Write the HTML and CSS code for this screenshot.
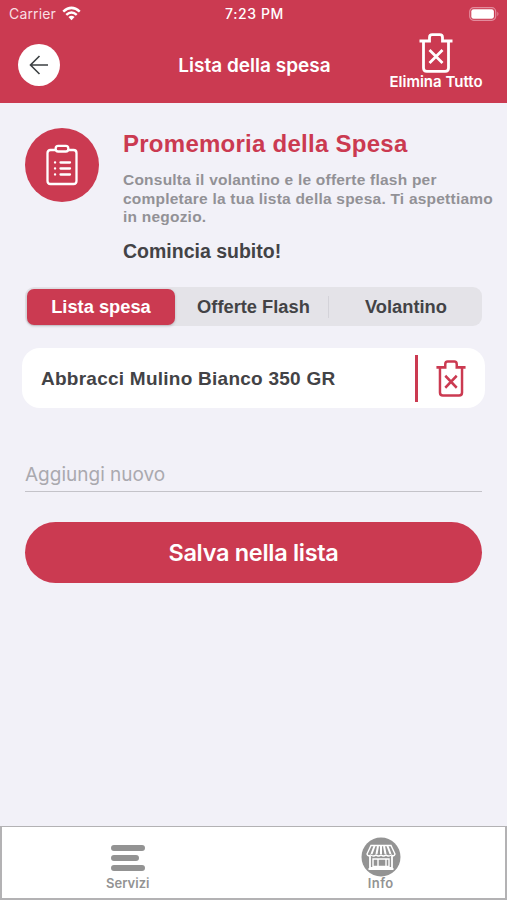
FILE: index.html
```
<!DOCTYPE html>
<html lang="it">
<head>
    <meta charset="UTF-8">
    <meta name="viewport" content="width=device-width, initial-scale=1.0">
    <title>Lista della spesa</title>
    <link rel="stylesheet" href="styles.css">
</head>
<body>
    <svg class="sprite" width="0" height="0">
        <symbol id="trash" viewBox="0 0 34 40">
            <path d="M.5 8H10.500V4.500Q10.500 1.700 13.300 1.700H20.700Q23.500 1.700 23.500 4.500V8H33.500M4.500 8V35Q4.500 38.300 7.800 38.300H26.200Q29.500 38.300 29.500 35V8M10.500 17L23.500 30M23.500 17L10.500 30"/>
        </symbol>
    </svg>

    <header>
        <div class="status-bar">
            <div class="carrier">
                <span>Carrier</span>
                <svg width="19" height="15" viewBox="0 0 20 15" fill="none" stroke="#fff" stroke-width="2.600">
                    <path d="M1.300 5.500Q10-2.400 18.700 5.500M4.500 8.900Q10 4 15.500 8.900"/>
                    <path d="M6.800 11.200Q10 8.600 13.200 11.200L10 14.500Z" fill="#fff" stroke="none"/>
                </svg>
            </div>
            <span class="time">7:23 PM</span>
            <svg class="battery" width="31" height="14" viewBox="0 0 31 14">
                <rect x=".7" y=".7" width="26" height="12.600" rx="4" fill="none" stroke="#e38c9d" stroke-width="1.200"/>
                <rect x="2.300" y="2.300" width="22.600" height="9.400" rx="2.300" fill="#fff"/>
                <path d="M28.400 4.800Q30.500 7 28.400 9.200Z" fill="#e38c9d"/>
            </svg>
        </div>
        <div class="nav">
            <button class="back" aria-label="Indietro">
                <svg width="20" height="20" viewBox="0 0 20 20" fill="none" stroke="#3c4043" stroke-width="1.600">
                    <path d="M19 10H1.500M10.500 1L1.500 10L10.500 19"/>
                </svg>
            </button>
            <h1>Lista della spesa</h1>
            <button class="delete-all">
                <svg class="trash" width="34" height="40"><use href="#trash"/></svg>
                <span>Elimina Tutto</span>
            </button>
        </div>
    </header>

    <main>
        <section class="intro">
            <div class="intro-icon">
                <svg width="32" height="42" viewBox="0 0 32 42" fill="none" stroke="#fff" stroke-width="2.300" stroke-linecap="round">
                    <path d="M9.500 6H4.500Q1.500 6 1.500 9V37Q1.500 40 4.500 40H27.500Q30.500 40 30.500 37V9Q30.500 6 27.500 6H22.500"/>
                    <rect x="9.700" y="1.800" width="12.600" height="5.700" rx="2.500"/>
                    <path d="M14.500 18.500H24M14.500 24.500H24M14.500 30.500H24M9 18.500H9.100M9 24.500H9.100M9 30.500H9.100"/>
                </svg>
            </div>
            <div class="intro-text">
                <h2>Promemoria della Spesa</h2>
                <p class="info-text">Consulta il volantino e le offerte flash per<br>completare la tua lista della spesa. Ti aspettiamo<br>in negozio.</p>
                <p class="start">Comincia subito!</p>
            </div>
        </section>

        <div class="tabs">
            <button class="tab active">Lista spesa</button>
            <button class="tab flash">Offerte Flash</button>
            <button class="tab leaflet">Volantino</button>
        </div>

        <ul class="items">
            <li>
                <span>Abbracci Mulino Bianco 350 GR</span>
                <button class="remove" aria-label="Elimina">
                    <svg class="trash" width="30" height="37" viewBox="0 0 34 40" preserveAspectRatio="none"><use href="#trash" width="34" height="40"/></svg>
                </button>
            </li>
        </ul>

        <input type="text" placeholder="Aggiungi nuovo">
        <button class="save">Salva nella lista</button>
    </main>

    <footer>
        <a class="services">
            <svg width="34" height="26" viewBox="0 0 34 26" stroke="#939393" stroke-width="6" stroke-linecap="round">
                <path d="M3 3H31M3 13H25M3 23H31"/>
            </svg>
            <span>Servizi</span>
        </a>
        <a class="info">
            <svg width="40" height="40" viewBox="0 0 40 40">
                <circle cx="20" cy="20" r="19.500" fill="#939393"/>
                <g fill="none" stroke="#fff" stroke-width="1.400">
                    <path d="M10 8.500H30L34 17Q33 20 30.300 18Q27.500 20 25 18Q22.500 20 20 18Q17.500 20 15 18Q12.500 20 9.700 18Q7 20 6 17Z"/>
                    <path d="M13.500 9L10.500 17M17 9L15.500 17M20 9V17M23 9L24.500 17M26.500 9L29.500 17" stroke-width="2"/>
                    <path d="M9 19V31H31V19M7.500 32H32.500" stroke-width="1.800"/>
                    <path d="M12 22H28V29.500H12ZM17 22V29.500M25 22V29.500"/>
                </g>
            </svg>
            <span>Info</span>
        </a>
    </footer>
</body>
</html>
```

FILE: styles.css
```
* {
    box-sizing: border-box;
}

body {
    font-family: "Liberation Sans", Arial, sans-serif;
    margin: 0;
    height: 900px;
    display: flex;
    flex-direction: column;
    background-color: #f2f1f8;
    color: #434346;
    overflow: hidden;
}

h1, h2, p, ul {
    margin: 0;
    padding: 0;
}

button {
    font-family: inherit;
    border: none;
    padding: 0;
    background: none;
    color: inherit;
    white-space: nowrap;
}

svg {
    display: block;
}

.sprite {
    position: absolute;
}

.trash {
    fill: none;
    stroke: currentColor;
    stroke-width: 2.8;
    overflow: visible;
}

header {
    height: 103px;
    background: #cb3a51;
    color: #fff;
    font-family: Inter, sans-serif;
}

.status-bar {
    height: 27px;
    padding: 0 7px 0 9px;
    display: grid;
    grid-template-columns: 1fr auto 1fr;
    align-items: center;
    font-size: 14px;
}

.carrier {
    display: flex;
    gap: 6px;
    align-items: center;
    color: #f9dfe3;
    letter-spacing: 0.15px;
}

.time {
    font-weight: 500;
    letter-spacing: 0.6px;
}

.battery {
    justify-self: end;
}

.nav {
    height: 76px;
    padding: 0 16px 0 18px;
    display: grid;
    grid-template-columns: 110px 1fr 110px;
    align-items: center;
}

.back {
    width: 42px;
    height: 42px;
    border-radius: 50%;
    background: #fff;
    display: flex;
    align-items: center;
    justify-content: center;
}

h1 {
    font-size: 19px;
    font-weight: 600;
    text-align: center;
}

.delete-all {
    height: 64px;
    display: flex;
    flex-direction: column;
    align-items: center;
    font-size: 15px;
    line-height: 18px;
    font-weight: 600;
}

main {
    flex: 1;
    display: flex;
    flex-direction: column;
    padding: 25px 25px 0;
}

.intro {
    display: flex;
    gap: 25px;
    height: 159px;
    white-space: nowrap;
}

.intro-icon {
    width: 74px;
    height: 74px;
    margin-right: -1px;
    border-radius: 50%;
    background: #cb3a51;
    display: flex;
    align-items: center;
    justify-content: center;
    flex-shrink: 0;
}

h2 {
    font-size: 24px;
    line-height: 32px;
    letter-spacing: 0.26px;
    color: #cb3a51;
}

.info-text {
    margin-top: 11px;
    font-size: 15.5px;
    line-height: 18.5px;
    letter-spacing: 0.22px;
    font-weight: bold;
    color: #929196;
}

.start {
    margin-top: 12px;
    font-size: 19.5px;
    line-height: 24px;
    font-weight: bold;
}

.tabs {
    height: 39px;
    display: grid;
    grid-template-columns: 148px 1fr 152px;
    padding: 2px;
    border-radius: 9px;
    background: #e4e3e8;
}

.tab {
    font-size: 18.3px;
    font-weight: bold;
}

.tab.active {
    background: #cb3a51;
    color: #fff;
    border-radius: 7px;
    box-shadow: 0 1px 3px rgba(0, 0, 0, 0.2);
}

.flash {
    padding-left: 4px;
}

.leaflet {
    margin: 7px 0;
    padding-left: 3px;
    border-left: 1px solid #d4d3d9;
}

.items {
    list-style: none;
    margin: 22px -3px 0;
}

.items li {
    height: 60px;
    padding: 0 19px;
    border-radius: 18px;
    background: #fff;
    display: flex;
    align-items: center;
    justify-content: space-between;
    font-size: 19px;
    font-weight: bold;
    letter-spacing: 0.25px;
}

.items span {
    padding-top: 2px;
}

.remove {
    height: 47px;
    padding-left: 18px;
    border-left: 3px solid #cb3a51;
    color: #cb3a51;
}

input {
    height: 34px;
    margin-top: 50px;
    padding: 0;
    border: none;
    border-bottom: 1px solid #c4c3c9;
    border-radius: 0;
    background: none;
    font-family: Inter, sans-serif;
    font-size: 19px;
}

input::placeholder {
    color: #aaa9af;
    opacity: 1;
}

.save {
    height: 61px;
    margin-top: 30px;
    border-radius: 31px;
    background: #cb3a51;
    color: #fff;
    font-family: Inter, sans-serif;
    font-size: 23.5px;
    font-weight: 600;
    letter-spacing: -0.3px;
}

footer {
    height: 74px;
    display: grid;
    grid-template-columns: 1fr 1fr;
    border: 2px solid #b3b2b4;
    border-top-width: 1px;
    background: #fff;
    color: #939393;
    font-family: Inter, sans-serif;
    font-size: 13px;
    font-weight: 600;
}

footer a {
    display: flex;
    flex-direction: column;
    align-items: center;
    line-height: 14px;
}

.services {
    padding-top: 18px;
}

.services span {
    margin-top: 5px;
}

.info {
    padding: 10px 0 0 3px;
}

.info span {
    margin-top: -1px;
    letter-spacing: 0.4px;
}
```
